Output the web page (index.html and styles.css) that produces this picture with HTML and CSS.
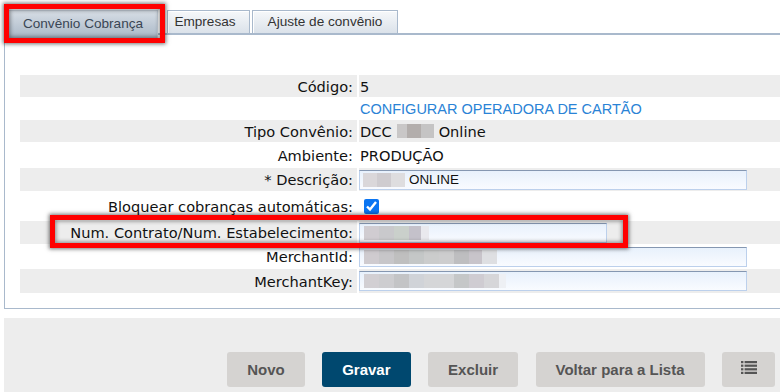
FILE: index.html
```html
<!DOCTYPE html>
<html lang="pt-BR">
<head>
<meta charset="utf-8">
<title>Convênio Cobrança</title>
<link rel="stylesheet" href="styles.css">
</head>
<body>
<div class="page">
  <div class="tabs">
    <div class="tab active">Convênio Cobrança</div>
    <div class="tab tab-emp">Empresas</div>
    <div class="tab tab-aj">Ajuste de convênio</div>
  </div>
  <div class="panel">
    <div class="form">
      <div class="lbl alt">Código:</div><div class="val alt">5</div>
      <div class="lbl"></div><div class="val"><a class="link">CONFIGURAR OPERADORA DE CARTÃO</a></div>
      <div class="lbl alt">Tipo Convênio:</div><div class="val alt">DCC <span class="blur blur-tipo"></span> Online</div>
      <div class="lbl">Ambiente:</div><div class="val">PRODUÇÃO</div>
      <div class="lbl alt">* Descrição:</div><div class="val alt"><div class="field"><span class="blur blur-desc"></span><span class="ftext">ONLINE</span></div></div>
      <div class="lbl">Bloquear cobranças automáticas:</div><div class="val"><input class="check" type="checkbox" checked></div>
      <div class="lbl alt">Num. Contrato/Num. Estabelecimento:</div><div class="val alt"><div class="field field-short"><span class="blur blur-num"></span></div></div>
      <div class="lbl">MerchantId:</div><div class="val"><div class="field"><span class="blur blur-id"></span></div></div>
      <div class="lbl alt">MerchantKey:</div><div class="val alt"><div class="field"><span class="blur blur-key"></span></div></div>
    </div>
  </div>
  <div class="footer">
    <button class="btn">Novo</button>
    <button class="btn primary">Gravar</button>
    <button class="btn">Excluir</button>
    <button class="btn">Voltar para a Lista</button>
    <button class="btn icon-btn" aria-label="Lista">
      <svg width="16" height="13" viewBox="0 0 16 13">
        <g fill="#555">
          <rect x="0" y="0" width="2.4" height="2.2"/><rect x="3.6" y="0" width="12.4" height="2.2"/>
          <rect x="0" y="3.6" width="2.4" height="2.2"/><rect x="3.6" y="3.6" width="12.4" height="2.2"/>
          <rect x="0" y="7.2" width="2.4" height="2.2"/><rect x="3.6" y="7.2" width="12.4" height="2.2"/>
          <rect x="0" y="10.8" width="2.4" height="2.2"/><rect x="3.6" y="10.8" width="12.4" height="2.2"/>
        </g>
      </svg>
    </button>
  </div>
  <div class="hl hl-tab"></div>
  <div class="hl hl-row"></div>
</div>
</body>
</html>
```
FILE: styles.css
```css
html, body {
  margin: 0;
  padding: 0;
  overflow: hidden;
  background: #fff;
}
.page {
  position: relative;
  width: 776px;
  padding-left: 4px;
  font-family: "DejaVu Sans", Verdana, sans-serif;
  font-size: 14.6px;
  color: #111;
}
.tabs {
  display: flex;
  align-items: flex-start;
  padding: 10px 0 0 4px;
  height: 23px;
  gap: 2px;
  position: relative;
  z-index: 1;
}
.tab {
  box-sizing: border-box;
  height: 23px;
  line-height: 21px;
  border: 1px solid #a9b9cc;
  border-bottom: none;
  background: linear-gradient(#f6f8fa, #dbe2ea);
  box-shadow: inset 1px 1px 0 #fff;
  font-family: "Liberation Sans", Arial, sans-serif;
  font-size: 13.6px;
  color: #333;
  text-align: center;
}
.tab.active {
  width: 150px;
  height: 28px;
  line-height: 25px;
  margin-right: 7px;
  background: linear-gradient(#d6dde5, #aab8c7);
  box-shadow: none;
  border-color: #c7d1dc;
  color: #3a4654;
}
.tab-emp { width: 83px; padding-right: 7px; }
.tab-aj { width: 146px; }
.panel {
  border-top: 2px solid #a9b9cc;
  border-left: 1px solid #a9b9cc;
  border-bottom: 1px solid #a9b9cc;
  padding: 40px 0 15px 15px;
}
.form {
  display: grid;
  grid-template-columns: 337px 1fr;
  grid-template-rows: 22px 23px 22px 26px 23px 30px 23px 25px 24px;
  column-gap: 2px;
}
.lbl {
  display: flex;
  align-items: center;
  justify-content: flex-end;
  padding-right: 4px;
  white-space: nowrap;
}
.val {
  display: flex;
  align-items: center;
  padding-left: 1px;
  white-space: nowrap;
}
.alt { background: #ededed; }
.link {
  font-family: "Liberation Sans", Arial, sans-serif;
  font-size: 14.5px;
  color: #2a83d6;
  text-decoration: none;
}
.blur {
  display: inline-block;
  height: 14px;
}
.blur-tipo {
  width: 37px;
  margin: 0 5px 0 5px;
  background: linear-gradient(90deg, #c9c7c7 0 10px, #b3aeac 10px 24px, #c5c4c4 24px);
}
.field {
  box-sizing: border-box;
  width: 388px;
  height: 20px;
  margin-left: -1px;
  border: 1px solid #bcd0ec;
  border-top-color: #8597b1;
  background: linear-gradient(#e8f1fc, #f9fbff);
  display: flex;
  align-items: center;
  padding-left: 3px;
}
.field-short { width: 248px; }
.ftext {
  font-family: "Liberation Sans", Arial, sans-serif;
  font-size: 13.4px;
  color: #111;
  margin-left: 4px;
}
.blur-desc {
  width: 42px;
  background: linear-gradient(90deg, #dad7da 0 14px, #cfccd0 14px 28px, #dedddf 28px);
}
.blur-num {
  width: 65px;
  margin-left: 1px;
  background: linear-gradient(90deg, #d0ccd1 0 15px, #c9c9cc 15px 30px, #cad0cb 30px 45px, #c4c1ca 45px 57px, #e9e9ee 57px);
}
.blur-id {
  width: 133px;
  margin-left: 1px;
  background: linear-gradient(90deg, #cfcbcf 0 15px, #c7c6c9 15px 30px, #bfbfbf 30px 45px, #c4c7c7 45px 60px, #cbcccc 60px 75px, #cdcdce 75px 90px, #bebec0 90px 105px, #c8c4ca 105px 118px, #dedfe2 118px);
}
.blur-key {
  width: 142px;
  margin-left: 1px;
  background: linear-gradient(90deg, #d2cfd3 0 15px, #cdcdd0 15px 30px, #c3c4c6 30px 45px, #d0d3d8 45px 60px, #d5d6d8 60px 90px, #c5c7c8 90px 105px, #cfccd2 105px 120px, #d6d6d9 120px 135px, #eef0f4 135px);
}
.check {
  width: 15px;
  height: 15px;
  margin: 0 0 0 4px;
  accent-color: #0a75f2;
}
.footer {
  margin-top: 9px;
  height: 80px;
  background: #ededed;
  display: flex;
  justify-content: flex-end;
  align-items: flex-start;
  gap: 17.5px;
  padding: 34px 5px 0 0;
  box-sizing: border-box;
}
.btn {
  height: 35px;
  padding: 0 20px;
  border: none;
  border-radius: 3px;
  background: #d5d3d1;
  color: #555;
  font-family: "Liberation Sans", Arial, sans-serif;
  font-weight: bold;
  font-size: 15px;
}
.btn.primary {
  background: #00486f;
  color: #fff;
}
.icon-btn {
  width: 53px;
  padding: 0;
  display: flex;
  justify-content: center;
  align-items: flex-start;
  padding-top: 9px;
}
.hl {
  position: absolute;
  box-sizing: border-box;
  border: 5px solid #ff0000;
  box-shadow: 0 0 4px 1px rgba(0,0,0,0.55), inset 0 0 4px 1px rgba(0,0,0,0.45);
  z-index: 2;
}
.hl-tab {
  left: 4px;
  top: 4px;
  width: 161px;
  height: 39px;
}
.hl-row {
  left: 50px;
  top: 215px;
  width: 578px;
  height: 33px;
}
```
